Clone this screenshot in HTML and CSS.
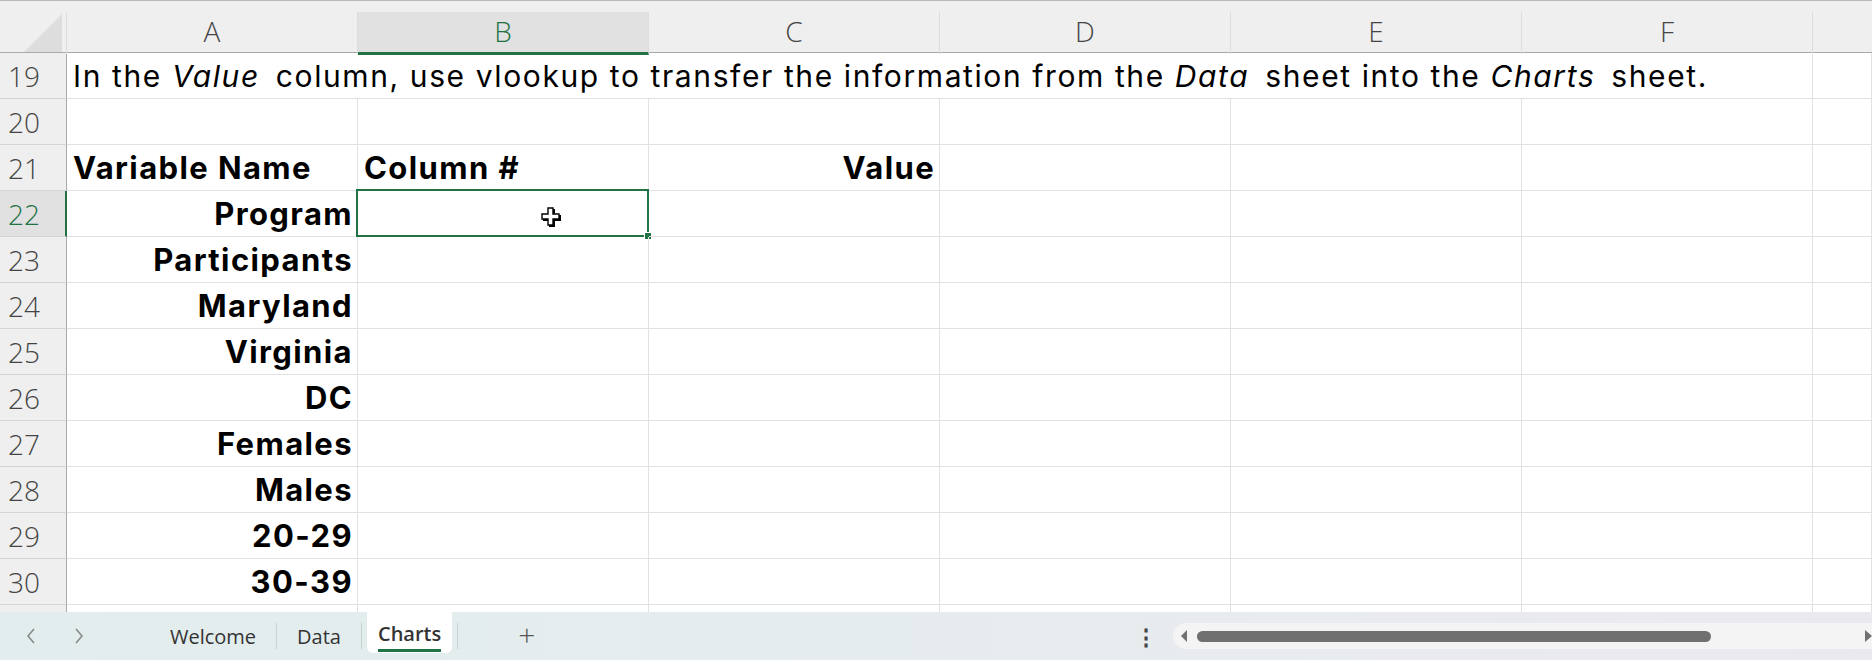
FILE: index.html
```html
<!DOCTYPE html>
<html lang="en">
<head>
    <meta charset="UTF-8">
    <title>Charts - Workbook</title>
    <link rel="stylesheet" href="styles.css">
</head>
<body>

    <div class="sheet">
        <div class="row colheads">
            <div class="corner"><span class="tri"></span></div>
            <div class="colhead">A</div>
            <div class="colhead active">B</div>
            <div class="colhead">C</div>
            <div class="colhead">D</div>
            <div class="colhead">E</div>
            <div class="colhead">F</div>
            <div class="colhead last"></div>
        </div>

        <div class="row">
            <div class="rownum">19</div>
            <div class="cell note"><span>In the <em>Value</em> column, use vlookup to transfer the information from the <em>Data</em> sheet into the <em>Charts</em> sheet.</span></div>
            <div class="cell"></div>
        </div>

        <div class="row">
            <div class="rownum">20</div>
            <div class="cell"></div><div class="cell"></div><div class="cell"></div>
            <div class="cell"></div><div class="cell"></div><div class="cell"></div><div class="cell"></div>
        </div>

        <div class="row">
            <div class="rownum">21</div>
            <div class="cell bold">Variable Name</div>
            <div class="cell bold">Column #</div>
            <div class="cell bold right">Value</div>
            <div class="cell"></div><div class="cell"></div><div class="cell"></div><div class="cell"></div>
        </div>

        <div class="row">
            <div class="rownum active">22</div>
            <div class="cell bold right">Program</div>
            <div class="cell selected">
                <svg class="cursor" width="22" height="22" viewBox="0 0 22 22">
                    <path d="M8 3h6v6h6v6h-6v6h-6v-6h-6v-6h6z" fill="#000"/>
                    <path d="M7 2h5v6h6v5h-6v6h-5v-6h-6v-5h6z" fill="#fff" stroke="#000" stroke-width="1.4"/>
                </svg>
                <span class="handle"></span>
            </div>
            <div class="cell"></div><div class="cell"></div><div class="cell"></div><div class="cell"></div><div class="cell"></div>
        </div>

        <div class="row">
            <div class="rownum">23</div>
            <div class="cell bold right">Participants</div>
            <div class="cell"></div><div class="cell"></div><div class="cell"></div><div class="cell"></div><div class="cell"></div><div class="cell"></div>
        </div>

        <div class="row">
            <div class="rownum">24</div>
            <div class="cell bold right">Maryland</div>
            <div class="cell"></div><div class="cell"></div><div class="cell"></div><div class="cell"></div><div class="cell"></div><div class="cell"></div>
        </div>

        <div class="row">
            <div class="rownum">25</div>
            <div class="cell bold right">Virginia</div>
            <div class="cell"></div><div class="cell"></div><div class="cell"></div><div class="cell"></div><div class="cell"></div><div class="cell"></div>
        </div>

        <div class="row">
            <div class="rownum">26</div>
            <div class="cell bold right">DC</div>
            <div class="cell"></div><div class="cell"></div><div class="cell"></div><div class="cell"></div><div class="cell"></div><div class="cell"></div>
        </div>

        <div class="row">
            <div class="rownum">27</div>
            <div class="cell bold right">Females</div>
            <div class="cell"></div><div class="cell"></div><div class="cell"></div><div class="cell"></div><div class="cell"></div><div class="cell"></div>
        </div>

        <div class="row">
            <div class="rownum">28</div>
            <div class="cell bold right">Males</div>
            <div class="cell"></div><div class="cell"></div><div class="cell"></div><div class="cell"></div><div class="cell"></div><div class="cell"></div>
        </div>

        <div class="row">
            <div class="rownum">29</div>
            <div class="cell bold right">20-29</div>
            <div class="cell"></div><div class="cell"></div><div class="cell"></div><div class="cell"></div><div class="cell"></div><div class="cell"></div>
        </div>

        <div class="row">
            <div class="rownum">30</div>
            <div class="cell bold right">30-39</div>
            <div class="cell"></div><div class="cell"></div><div class="cell"></div><div class="cell"></div><div class="cell"></div><div class="cell"></div>
        </div>

        <div class="row stub">
            <div class="rownum"></div>
            <div class="cell"></div><div class="cell"></div><div class="cell"></div>
            <div class="cell"></div><div class="cell"></div><div class="cell"></div><div class="cell"></div>
        </div>
    </div>

    <div class="tabbar">
        <div class="nav">
            <svg class="arrow" width="10" height="16" viewBox="0 0 10 16"><path d="M8 1L2 8l6 7" fill="none" stroke="#8a8a8a" stroke-width="1.6"/></svg>
            <svg class="arrow" width="10" height="16" viewBox="0 0 10 16"><path d="M2 1l6 7-6 7" fill="none" stroke="#8a8a8a" stroke-width="1.6"/></svg>
        </div>
        <div class="tabs">
            <span class="tab">Welcome</span>
            <span class="sep"></span>
            <span class="tab">Data</span>
            <span class="sep"></span>
            <span class="tab current"><span class="label">Charts</span></span>
            <span class="sep"></span>
            <span class="add">+</span>
        </div>
        <div class="spacer"></div>
        <div class="more">&#8942;</div>
        <div class="scroll">
            <span class="tri-left"></span>
            <span class="thumb"></span>
            <span class="tri-right"></span>
        </div>
    </div>

</body>
</html>
```

FILE: styles.css
```css
body, html {
    margin: 0;
    padding: 0;
    width: 100%;
    height: 100%;
    overflow: hidden;
    background-color: #fff;
    font-family: "Open Sans", sans-serif;
}
.sheet {
    border-top: 1px solid #bababa;
}
.row {
    display: grid;
    grid-template-columns: 67px repeat(6, 291px) 1fr;
    height: 46px;
}
.colheads {
    height: 52px;
    background-color: #efefef;
    border-bottom: 1px solid #a9a9a9;
    box-sizing: border-box;
    padding-top: 11px;
}
.corner {
    position: relative;
    border-right: 1px solid #dcdcdc;
}
.corner .tri {
    position: absolute;
    right: 4px;
    bottom: 2px;
    width: 0;
    height: 0;
    border-left: 38px solid transparent;
    border-bottom: 38px solid #dddddd;
}
.colhead {
    display: flex;
    align-items: center;
    justify-content: center;
    border-right: 1px solid #dcdcdc;
    font-size: 28px;
    font-weight: 300;
    color: #444;
    padding-bottom: 4px;
}
.colhead.active {
    background-color: #e1e1e1;
    color: #217346;
    border-bottom: 3px solid #217346;
    padding-bottom: 2px;
    margin-bottom: -1px;
}
.colhead.last {
    border-right: none;
}
.rownum {
    display: flex;
    align-items: center;
    padding-left: 8px;
    background-color: #efefef;
    border-right: 1px solid #a9a9a9;
    border-bottom: 1px solid #d4d4d4;
    font-size: 28px;
    font-weight: 300;
    color: #444;
}
.rownum.active {
    background-color: #e1e1e1;
    color: #217346;
    border-right: 2px solid #217346;
}
.cell {
    position: relative;
    display: flex;
    align-items: center;
    padding: 0 6px;
    border-right: 1px solid #e1e1e1;
    border-bottom: 1px solid #e1e1e1;
    font-family: Inter, sans-serif;
    font-size: 30px;
    color: #000;
    white-space: nowrap;
    min-width: 0;
}
.note {
    grid-column: 2 / 8;
    letter-spacing: 1.6px;
}
.note em {
    margin-right: 6px;
}
.bold {
    font-size: 31px;
    font-weight: 700;
    letter-spacing: 1.4px;
}
.right {
    justify-content: flex-end;
    padding-right: 4px;
}
.selected::before {
    content: "";
    position: absolute;
    top: -2px;
    left: -2px;
    right: -1px;
    bottom: -1px;
    border: 2px solid #217346;
}
.cursor {
    position: absolute;
    left: 183px;
    top: 15px;
}
.handle {
    position: absolute;
    right: -4px;
    bottom: -4px;
    width: 6px;
    height: 6px;
    background-color: #217346;
    border: 1px solid #fff;
}
.stub {
    height: 7px;
}
.stub .rownum {
    border-bottom: none;
}
.stub .cell {
    border-bottom: none;
}

.tabbar {
    display: flex;
    align-items: center;
    height: 48px;
    background: linear-gradient(90deg, #e2eded 0%, #e6ecee 50%, #ebe9f0 100%);
    color: #333;
}
.nav {
    display: flex;
    gap: 38px;
    padding-left: 26px;
    width: 150px;
    box-sizing: border-box;
}
.tabs {
    display: flex;
    align-items: center;
    height: 100%;
}
.tab {
    font-size: 20px;
    padding: 0 20px;
    color: #333;
}
.sep {
    width: 1px;
    height: 26px;
    background-color: #c9d3d3;
}
.tab.current {
    align-self: stretch;
    display: flex;
    align-items: center;
    background-color: #fff;
    border-radius: 0 0 6px 6px;
    margin: 0 5px 7px 5px;
    padding: 0 11px;
    font-weight: 600;
}
.tab.current .label {
    border-bottom: 3px solid #217346;
    padding-top: 6px;
    padding-bottom: 2px;
}
.add {
    font-size: 30px;
    font-weight: 300;
    color: #555;
    margin-left: 60px;
    padding-bottom: 4px;
}
.spacer {
    flex: 1;
}
.more {
    font-size: 22px;
    font-weight: 700;
    color: #444;
    margin-right: 16px;
}
.scroll {
    position: relative;
    width: 699px;
    height: 26px;
    background-color: #f4f4f4;
    border-radius: 13px 0 0 13px;
}
.thumb {
    position: absolute;
    left: 24px;
    top: 8px;
    width: 514px;
    height: 11px;
    background-color: #707070;
    border-radius: 6px;
}
.tri-left {
    position: absolute;
    left: 8px;
    top: 7px;
    border-right: 6px solid #707070;
    border-top: 6px solid transparent;
    border-bottom: 6px solid transparent;
}
.tri-right {
    position: absolute;
    right: 0;
    top: 7px;
    border-left: 7px solid #707070;
    border-top: 6px solid transparent;
    border-bottom: 6px solid transparent;
}
```
